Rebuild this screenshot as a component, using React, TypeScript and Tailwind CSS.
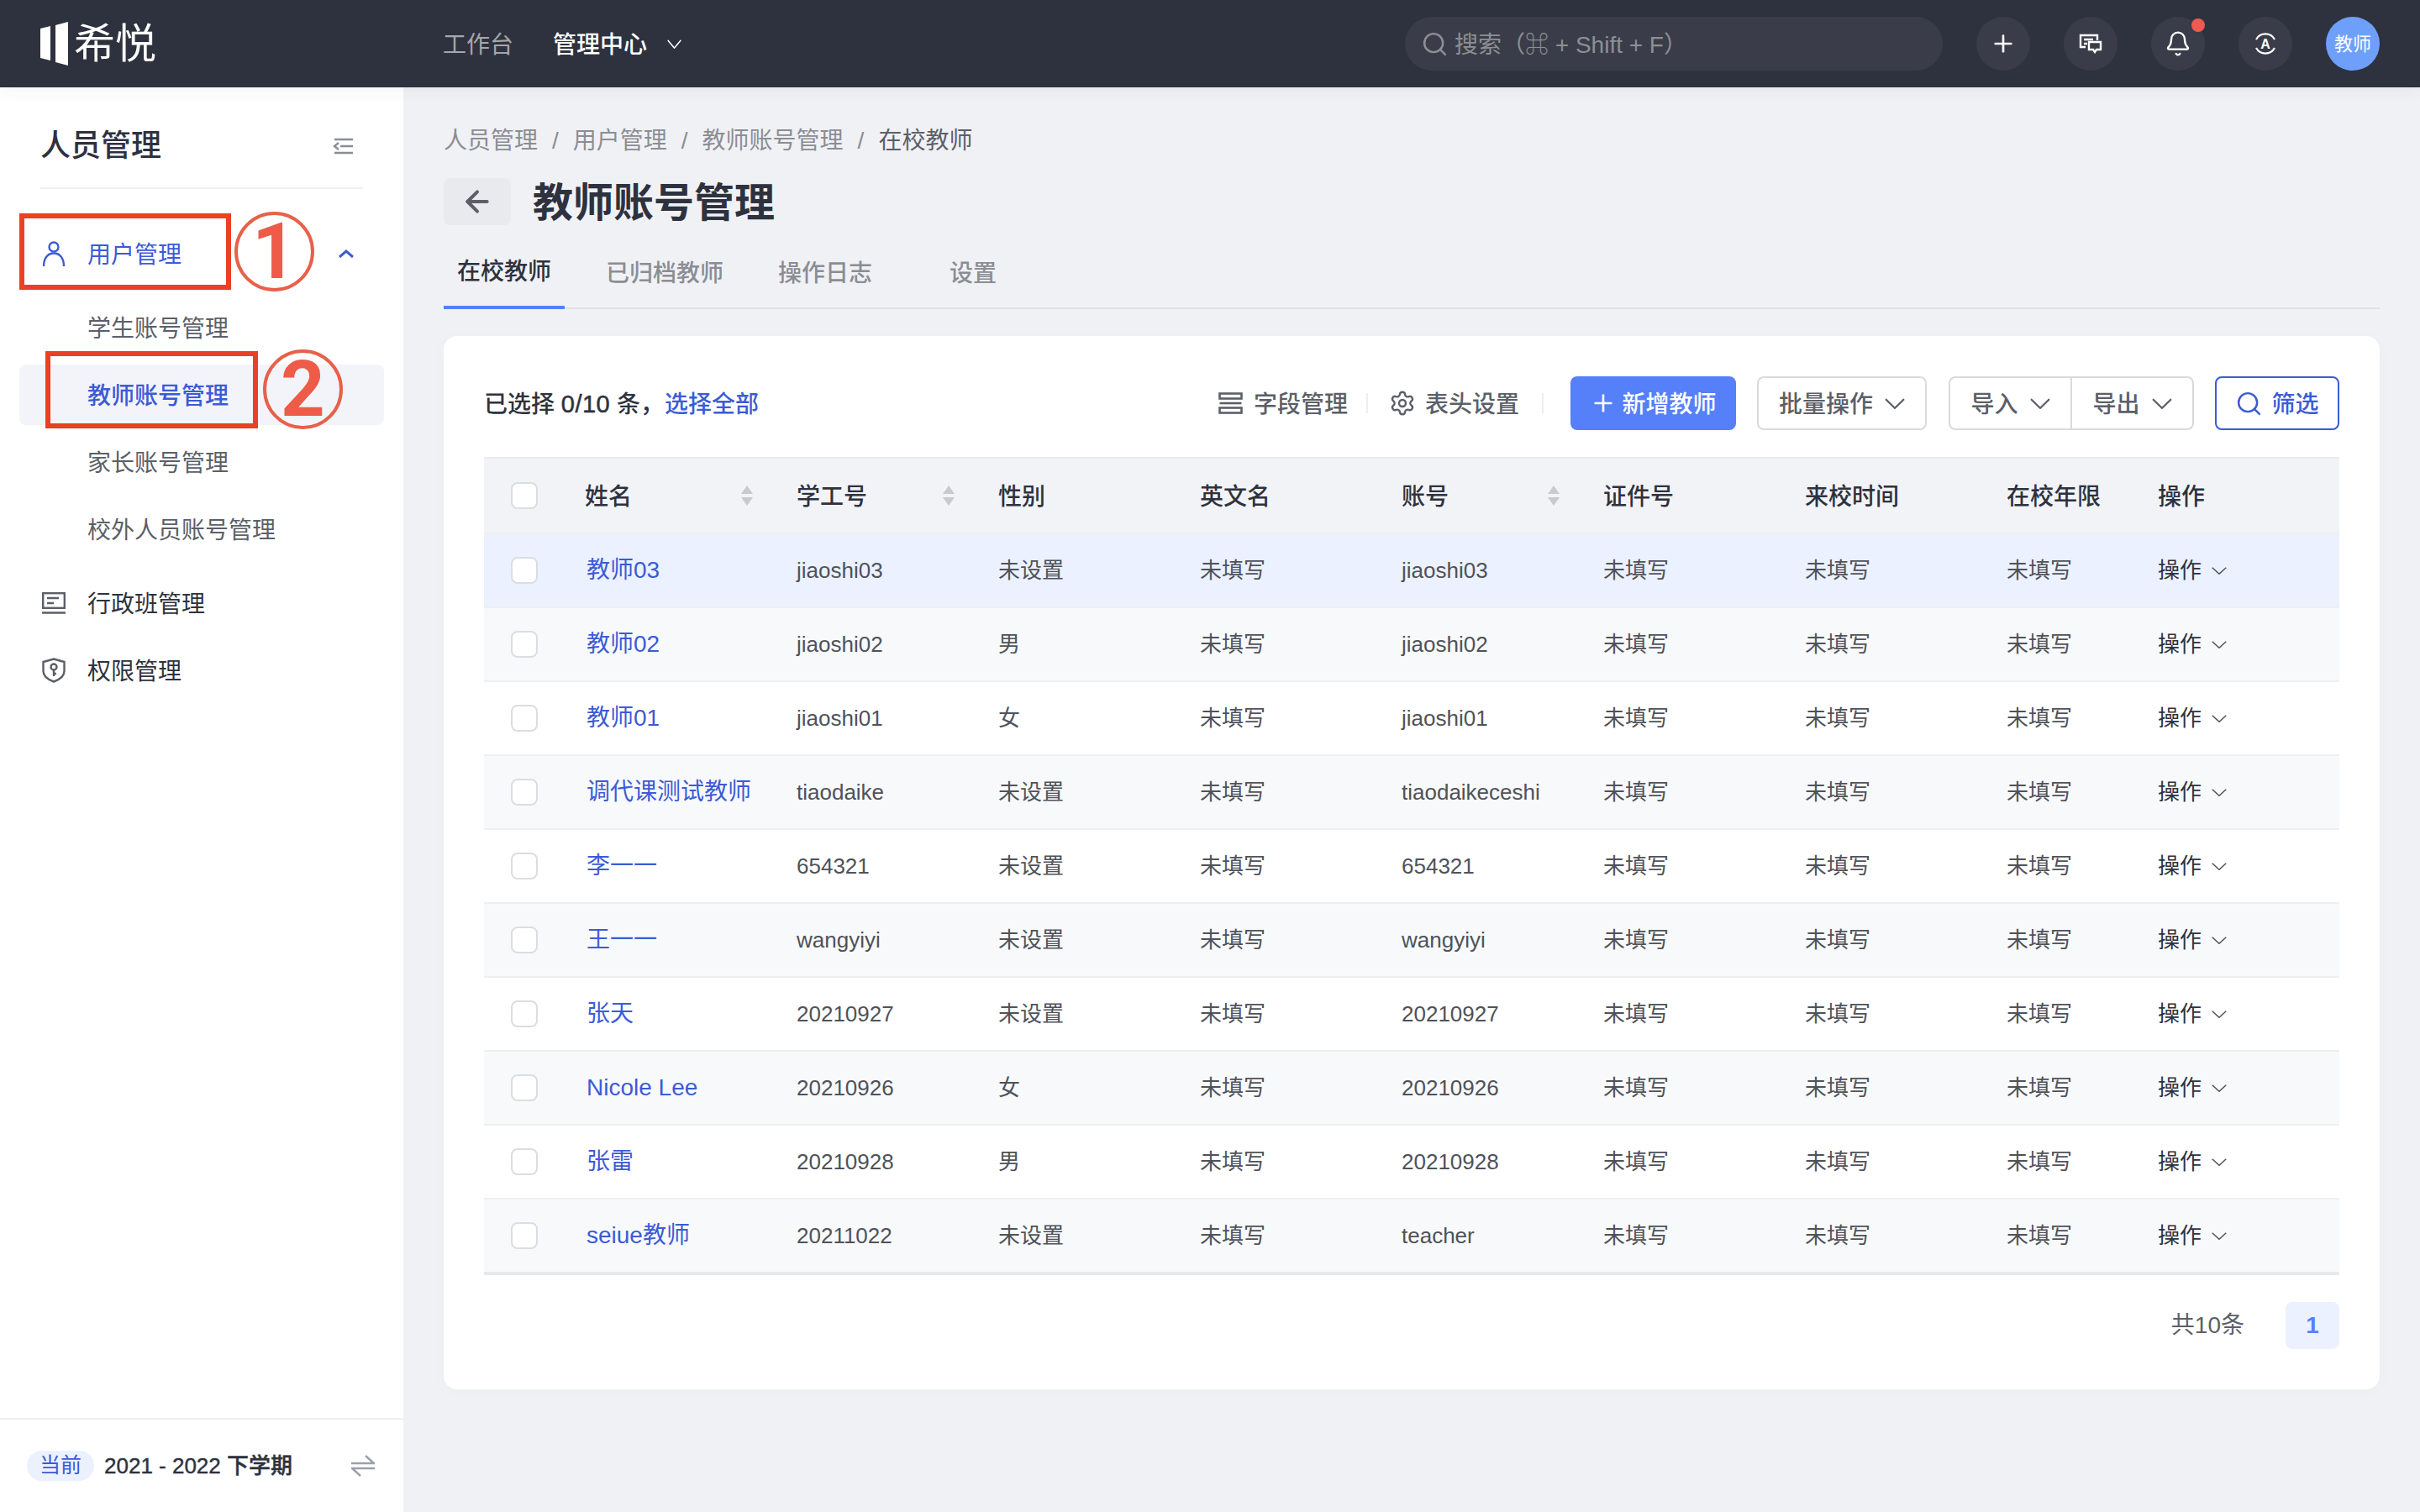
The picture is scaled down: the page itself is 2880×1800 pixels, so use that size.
import { ArrowLeft, Bell, Plus, Search, Settings } from "lucide-react"

const teachers = [
    { name: "教师03", no: "jiaoshi03", gender: "未设置", account: "jiaoshi03" },
    { name: "教师02", no: "jiaoshi02", gender: "男", account: "jiaoshi02" },
    { name: "教师01", no: "jiaoshi01", gender: "女", account: "jiaoshi01" },
    { name: "调代课测试教师", no: "tiaodaike", gender: "未设置", account: "tiaodaikeceshi" },
    { name: "李一一", no: "654321", gender: "未设置", account: "654321" },
    { name: "王一一", no: "wangyiyi", gender: "未设置", account: "wangyiyi" },
    { name: "张天", no: "20210927", gender: "未设置", account: "20210927" },
    { name: "Nicole Lee", no: "20210926", gender: "女", account: "20210926" },
    { name: "张雷", no: "20210928", gender: "男", account: "20210928" },
    { name: "seiue教师", no: "20211022", gender: "未设置", account: "teacher" },
]

const gridCols = "grid grid-cols-[120px_252px_240px_240px_240px_240px_240px_240px_180px_216px] items-center"

const Chevron = ({ className }: { className: string }) => (
    <svg viewBox="0 0 24 12" fill="none" preserveAspectRatio="none" className={className}>
        <path d="M1 1 L12 11 L23 1" stroke="currentColor" strokeWidth="2" />
    </svg>
)

const SortIcon = () => (
    <svg width="16" height="24" viewBox="0 0 16 24" className="shrink-0">
        <polygon points="8,0 15,10 1,10" fill="#c9cacd" />
        <polygon points="1,14 15,14 8,24" fill="#c9cacd" />
    </svg>
)

const HeaderCell = ({ label, sort }: { label: string; sort?: boolean }) => (
    <div className="flex items-center justify-between pr-[51px]">
        <span className="pt-[3px]">{label}</span>
        {sort && <SortIcon />}
    </div>
)

const IconButton = ({ children }: { children: React.ReactNode }) => (
    <div className="relative flex h-16 w-16 items-center justify-center rounded-full bg-[#3a3d49] text-white">{children}</div>
)

// annotation circle with its number, laid over the menu
const Marker = ({ className, children }: { className: string; children: React.ReactNode }) => (
    <div className={`absolute flex h-[95px] w-[95px] items-center justify-center rounded-full border-[4px] border-[#e8604a] font-['Roboto',sans-serif] text-[92px] leading-none font-bold text-[#ee5b48] ${className}`}>
        {children}
    </div>
)

const Logo = () => (
    <div className="flex w-[479px] shrink-0 items-center">
        <svg width="33" height="52" viewBox="0 0 33 52" fill="#fff">
            <path d="M0 8 L12 5 L12 46 L0 43 Z" />
            <path d="M18 4 L33 0 L33 52 L18 48 Z" />
        </svg>
        <span className="ml-[7px] text-[49px] leading-none font-normal text-white">希悦</span>
    </div>
)

const TopBar = () => (
    <header className="z-10 flex h-[104px] shrink-0 items-center bg-[#2e323e] pr-12 pl-12 shadow-[0_4px_20px_rgba(40,50,80,0.05)]">
        <Logo />
        <span className="pt-[4px] text-[28px] text-[#a6a7ac]">工作台</span>
        <span className="ml-[47px] pt-[4px] text-[28px] font-medium text-white">管理中心</span>
        <Chevron className="ml-6 h-[11px] w-[17px] text-white" />
        <div className="ml-auto flex h-16 w-[640px] items-center rounded-full bg-[#3a3d49] pl-[19px] text-[28px] text-[#8e8f94]">
            <Search size={33} strokeWidth={1.8} />
            <span className="ml-[7px] pt-[4px]">搜索（⌘ + Shift + F）</span>
        </div>
        <div className="ml-10 flex items-center gap-10">
            <IconButton>
                <Plus size={32} strokeWidth={2} />
            </IconButton>
            <IconButton>
                <svg width="28" height="24" viewBox="0 0 28 24" fill="none" stroke="currentColor" strokeWidth="2.4">
                    <path d="M8 16 H2 V2 H22 V8" />
                    <path d="M6 7 H17 M6 12 H10" />
                    <path d="M12 10 H26 V19 H21 L19 22 L17 19 H12 Z" />
                </svg>
            </IconButton>
            <IconButton>
                <Bell size={32} strokeWidth={1.8} />
                <span className="absolute top-[2px] right-[0px] h-4 w-4 rounded-full bg-[#ee5a52]" />
            </IconButton>
            <IconButton>
                <svg width="28" height="28" viewBox="0 0 28 28" fill="none" stroke="currentColor" strokeWidth="2.2">
                    <path d="M3 9 A12.5 12.5 0 0 1 25 9" />
                    <path d="M3 19 A12.5 12.5 0 0 0 25 19" />
                    <text x="14" y="20" textAnchor="middle" fontSize="16" fill="currentColor" stroke="none" fontWeight="700">A</text>
                </svg>
            </IconButton>
            <div className="flex h-16 w-16 items-center justify-center rounded-full bg-[#6ea0fb] text-[22px] text-white">教师</div>
        </div>
    </header>
)

const Sidebar = () => (
    <aside className="relative flex w-[480px] shrink-0 flex-col bg-white">
        <div className="mx-12 flex h-[121px] items-center justify-between border-b-2 border-[#f0f0f2] pt-[20px] pr-[12px]">
            <span className="text-[36px] font-medium text-[#2e323e]">人员管理</span>
            <svg width="24" height="20" viewBox="0 0 24 20" fill="none" stroke="#8b8d93" strokeWidth="2.4">
                <path d="M2 2 H24 M9 10 H24 M2 18 H24" />
                <path d="M7 6 L2 10 L7 14" />
            </svg>
        </div>
        <nav className="mt-[41px] flex flex-col px-[23px] text-[28px]">
            <div className="flex h-[72px] items-center pr-[36px] pl-[27px] text-[#3c5bd6]">
                <svg width="28" height="30" viewBox="0 0 28 30" fill="none" stroke="currentColor" strokeWidth="2.4">
                    <circle cx="14" cy="7" r="5.5" />
                    <path d="M2 30 C2 20 7 14.5 14 14.5 S26 20 26 30" />
                </svg>
                <span className="ml-[26px] pt-[4px]">用户管理</span>
                <svg width="18" height="10" viewBox="0 0 18 10" fill="none" stroke="currentColor" strokeWidth="3" className="ml-auto">
                    <path d="M1 9 L9 2 L17 9" />
                </svg>
            </div>
            <div className="mt-4 flex flex-col gap-2 text-[#5c5f68]">
                <div className="flex h-[72px] items-center pt-[4px] pl-[81px]">学生账号管理</div>
                <div className="flex h-[72px] items-center rounded-lg bg-[#f2f4f9] pt-[4px] pl-[81px] font-medium text-[#3c5bd6]">教师账号管理</div>
                <div className="flex h-[72px] items-center pt-[4px] pl-[81px]">家长账号管理</div>
                <div className="flex h-[72px] items-center pt-[4px] pl-[81px]">校外人员账号管理</div>
            </div>
            <div className="mt-4 flex h-[72px] items-center pl-[27px] text-[#2e323e]">
                <svg width="28" height="26" viewBox="0 0 28 26" fill="none" stroke="#5c5f68" strokeWidth="2.4">
                    <rect x="1.2" y="1.2" width="25.6" height="17.6" />
                    <path d="M6 7 H20 M6 13 H14 M0 24.5 H28" />
                </svg>
                <span className="ml-[26px] pt-[4px]">行政班管理</span>
            </div>
            <div className="mt-2 flex h-[72px] items-center pl-[27px] text-[#2e323e]">
                <svg width="28" height="30" viewBox="0 0 28 30" fill="none" stroke="#5c5f68" strokeWidth="2.4">
                    <path d="M14 1.5 L26.5 5 V16 C26.5 22 21 26 14 28.5 C7 26 1.5 22 1.5 16 V5 Z" />
                    <circle cx="14" cy="11" r="3.5" />
                    <path d="M14 14.5 V22 M14 19 H17" />
                </svg>
                <span className="ml-[26px] pt-[4px]">权限管理</span>
            </div>
        </nav>
        <div className="mt-auto flex h-[112px] items-center border-t-2 border-[#eeeef0] pr-[34px] pl-8">
            <span className="flex h-9 w-20 items-center justify-center rounded-full bg-[#ebf1ff] text-[25px] text-[#3c5bd6]">当前</span>
            <span className="ml-3 text-[26px] font-medium text-[#2e323e] [-webkit-text-stroke:0.4px_#2e323e]">2021 - 2022 下学期</span>
            <svg width="28" height="26" viewBox="0 0 28 26" fill="none" stroke="#9ca0a8" strokeWidth="2.4" className="ml-auto">
                <path d="M0 10 H27 L17 1" />
                <path d="M28 16 H1 L11 25" />
            </svg>
        </div>

        {/* red annotations drawn over the menu */}
        <div className="absolute top-[150px] left-[23px] h-[91px] w-[252px] border-[6px] border-[#ea4025]" />
        <Marker className="top-[148px] left-[279px]">1</Marker>
        <div className="absolute top-[314px] left-[54px] h-[92px] w-[253px] border-[6px] border-[#ea4025]" />
        <Marker className="top-[312px] left-[313px]">2</Marker>
    </aside>
)

const Toolbar = () => (
    <div className="flex h-16 items-center justify-between">
        <div className="pt-[4px] text-[28px] font-medium text-[#2e323e]">
            已选择 <span className="text-[29px] tracking-[0.5px] [-webkit-text-stroke:0.5px_#2e323e]">0/10</span> 条，<span className="ml-[1px] text-[#3c5bd6]">选择全部</span>
        </div>
        <div className="flex items-center text-[28px] font-medium text-[#5c5f68]">
            <svg width="29" height="26" viewBox="0 0 29 26" fill="none" stroke="currentColor" strokeWidth="2.6">
                <rect x="1.5" y="1.5" width="26" height="6" />
                <path d="M1.5 13 H27.5" />
                <rect x="1.5" y="18.5" width="26" height="6" />
            </svg>
            <span className="ml-[13px] pt-[4px]">字段管理</span>
            <span className="mr-[25px] ml-[22px] h-6 w-[2px] bg-[#eeeef0]" />
            <Settings size={32} strokeWidth={1.8} />
            <span className="ml-[11px] pt-[4px]">表头设置</span>
            <span className="ml-[27px] h-6 w-[2px] bg-[#eeeef0]" />
            <button className="ml-8 flex h-16 w-[197px] items-center justify-center gap-[6px] rounded-lg bg-[#5580fa] text-white">
                <Plus size={32} strokeWidth={2} />
                <span className="pt-[4px]">新增教师</span>
            </button>
            <button className="ml-[25px] flex h-16 w-[202px] items-center justify-center gap-[14px] rounded-lg border-2 border-[#d9dadd]">
                <span className="pt-[4px]">批量操作</span>
                <Chevron className="h-[13px] w-6" />
            </button>
            <div className="ml-[26px] flex h-16 w-[292px] items-center rounded-lg border-2 border-[#d9dadd]">
                <div className="flex h-full flex-1 items-center justify-center gap-[14px] border-r-2 border-[#d9dadd]">
                    <span className="pt-[4px]">导入</span>
                    <Chevron className="h-[13px] w-6" />
                </div>
                <div className="flex h-full flex-1 items-center justify-center gap-[14px]">
                    <span className="pt-[4px]">导出</span>
                    <Chevron className="h-[13px] w-6" />
                </div>
            </div>
            <button className="ml-[25px] flex h-16 w-[148px] items-center justify-center gap-[10px] rounded-lg border-2 border-[#3c5bd6] text-[#3c5bd6]">
                <Search size={33} strokeWidth={1.8} />
                <span className="pt-[4px]">筛选</span>
            </button>
        </div>
    </div>
)

const Checkbox = () => <div className="ml-8 h-8 w-8 rounded-lg border-2 border-[#dcdde0] bg-white" />

const TeacherTable = () => (
    <div className="mt-8">
        <div className={`${gridCols} h-[90px] border-t-2 border-[#ebebed] bg-[#f2f3f7] text-[28px] font-medium text-[#2e323e]`}>
            <Checkbox />
            <HeaderCell label="姓名" sort />
            <HeaderCell label="学工号" sort />
            <HeaderCell label="性别" />
            <HeaderCell label="英文名" />
            <HeaderCell label="账号" sort />
            <HeaderCell label="证件号" />
            <HeaderCell label="来校时间" />
            <HeaderCell label="在校年限" />
            <HeaderCell label="操作" />
        </div>
        {teachers.map((t, i) => (
            <div
                key={t.name}
                className={`${gridCols} h-[88px] border-t-2 border-[#eeeff2] text-[26px] text-[#4f5259] ${i === 0 ? "bg-[#ebf1ff]" : i % 2 === 1 ? "bg-[#f8f9fb]" : "bg-white"}`}
            >
                <Checkbox />
                <span className="pl-[2px] text-[28px] text-[#3c5bd6]">{t.name}</span>
                <span>{t.no}</span>
                <span>{t.gender}</span>
                <span>未填写</span>
                <span>{t.account}</span>
                <span>未填写</span>
                <span>未填写</span>
                <span>未填写</span>
                <span className="flex items-center gap-3 text-[#2e323e]">
                    操作
                    <Chevron className="h-[9px] w-[18px] text-[#4f5259]" />
                </span>
            </div>
        ))}
        <div className="h-[4px] bg-[#e8e9ec]" />
    </div>
)

export default function App() {
    return (
        <div className="flex h-screen w-full flex-col overflow-hidden bg-[#f0f1f5] font-[family-name:'Liberation_Sans','Noto_Sans_CJK_SC',sans-serif]">
            <TopBar />
            <div className="flex flex-1">
                <Sidebar />
                <main className="flex-1 px-12 pt-[44px]">
                    <div className="flex h-10 items-center gap-[17px] text-[28px] text-[#8b8d93]">
                        <span>人员管理</span>
                        <span>/</span>
                        <span>用户管理</span>
                        <span>/</span>
                        <span>教师账号管理</span>
                        <span>/</span>
                        <span className="text-[#5c5f68]">在校教师</span>
                    </div>
                    <div className="mt-[24px] flex h-14 items-center">
                        <div className="flex h-14 w-20 items-center justify-center rounded-lg bg-[#e8eaee] text-[#5c5f68]">
                            <ArrowLeft size={40} strokeWidth={2.4} />
                        </div>
                        <h1 className="ml-[26px] pt-[3px] text-[48px] font-bold text-[#2e323e]">教师账号管理</h1>
                    </div>
                    <div className="mt-5 flex h-20 gap-[33px] border-b-2 border-[#e0e1e6] text-[28px] font-medium text-[#8b8d93]">
                        <div className="flex h-20 items-center border-b-4 border-[#5580fa] px-4 pt-[16px] pb-[20px] text-[#2e323e]">在校教师</div>
                        <div className="flex h-20 items-center px-4 pt-[18px] pb-[22px]">已归档教师</div>
                        <div className="flex h-20 items-center px-4 pt-[18px] pb-[22px]">操作日志</div>
                        <div className="ml-[27px] flex h-20 items-center px-4 pt-[18px] pb-[22px]">设置</div>
                    </div>
                    <section className="mt-8 rounded-2xl bg-white px-12 pt-12 pb-12 shadow-[0_4px_24px_rgba(40,50,80,0.02)]">
                        <Toolbar />
                        <TeacherTable />
                        <div className="mt-8 flex items-center justify-end text-[28px] text-[#5c5f68]">
                            <span>共10条</span>
                            <span className="ml-[49px] flex h-14 w-16 items-center justify-center rounded-lg bg-[#ebf1ff] font-bold text-[#5580fa]">1</span>
                        </div>
                    </section>
                </main>
            </div>
        </div>
    )
}
